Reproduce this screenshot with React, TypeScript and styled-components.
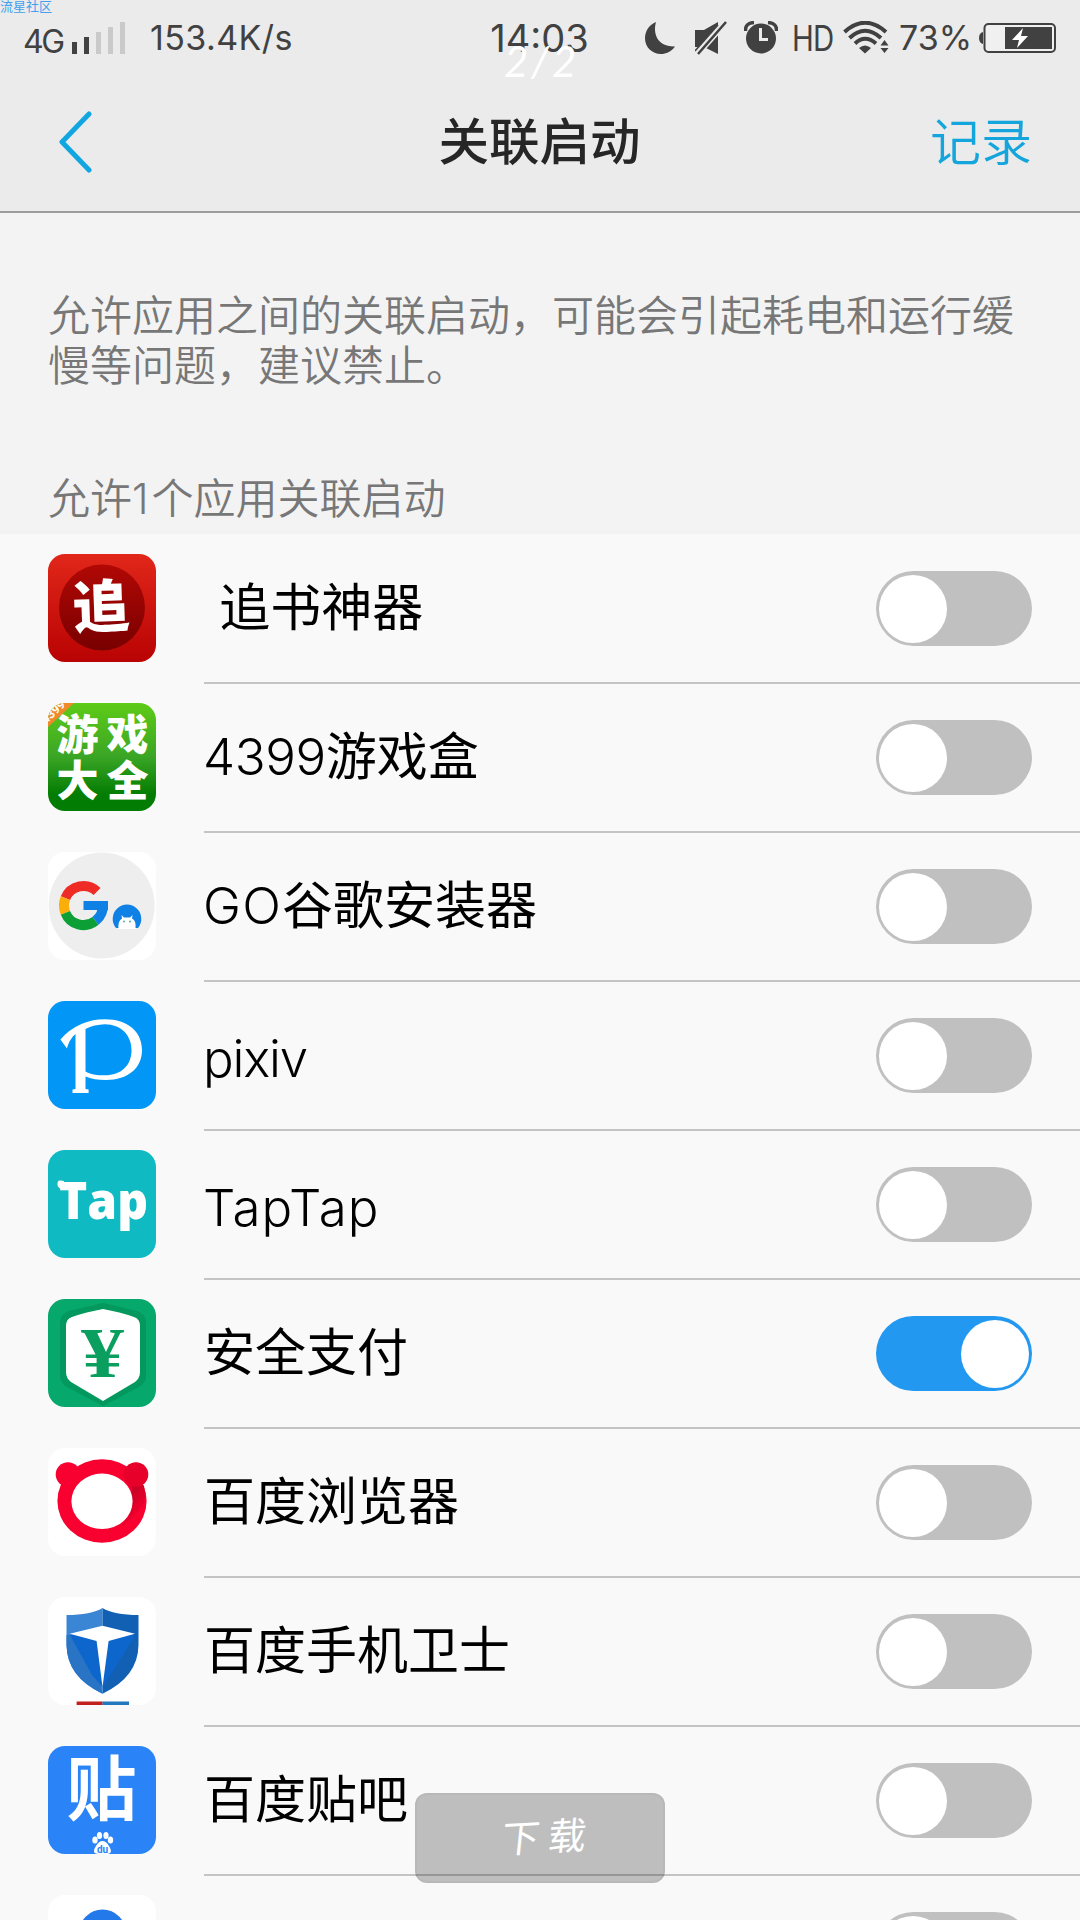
import styled, { createGlobalStyle } from "styled-components";
import { useState, ReactNode } from "react";

const GlobalStyle = createGlobalStyle`
  * {
    box-sizing: border-box;
  }
  body {
    margin: 0;
    background: #f3f3f3;
    font-family: Inter, "Noto Sans CJK SC", sans-serif;
  }
`;

const StyledPage = styled.div`
  position: relative;
  width: 1080px;
  height: 1920px;
  overflow: hidden;
  background: #f3f3f3;
`;

const StyledHeader = styled.header`
  display: flex;
  flex-direction: column;
  height: 213px;
  background: #ebebeb;
  border-bottom: 2px solid #9b9d9b;
`;

const StyledStatusBar = styled.div`
  display: grid;
  grid-template-columns: 1fr auto 1fr;
  align-items: center;
  height: 75px;
  padding: 0 24px 0 23px;
  color: #414141;
`;

const StyledStatusGroup = styled.div<{ $end?: boolean }>`
  display: flex;
  align-items: center;
  justify-content: ${(p) => (p.$end ? "flex-end" : "flex-start")};
`;

const StyledStatusText = styled.span<{ $size: number; $width?: number; $spacing?: number; $drop?: number; $left?: number }>`
  width: ${(p) => (p.$width ? `${p.$width}px` : "auto")};
  margin-left: ${(p) => p.$left || 0}px;
  padding-top: ${(p) => p.$drop || 0}px;
  font-size: ${(p) => p.$size}px;
  letter-spacing: ${(p) => p.$spacing || 0}px;
  line-height: 40px;
  white-space: nowrap;
`;

const StyledNetworkText = styled(StyledStatusText)`
  transform: scaleX(0.84);
  transform-origin: left;
`;

const StyledIcon = styled.svg<{ $left?: number }>`
  display: block;
  flex: none;
  margin-left: ${(p) => p.$left || 0}px;
`;

const StyledNavBar = styled.div`
  display: grid;
  grid-template-columns: 1fr auto 1fr;
  align-items: center;
  height: 134px;
  padding: 0 48px 0 58px;
`;

const StyledTitle = styled.h1`
  margin: 0;
  padding-right: 11px;
  font-size: 50.5px;
  font-weight: 500;
  line-height: 60px;
  color: #262626;
`;

const StyledBackButton = styled.button`
  justify-self: start;
  padding: 0;
  border: 0;
  background: none;
`;

const StyledRecordButton = styled.button`
  justify-self: end;
  padding: 2px 0 0;
  border: 0;
  background: none;
  font: 350 51px / 60px Inter, "Noto Sans CJK SC", sans-serif;
  color: #14a5dc;
`;

const StyledHint = styled.p`
  margin: 0;
  padding: 78px 48px 0;
  font-size: 42px;
  font-weight: 350;
  line-height: 49.5px;
  color: #777;
`;

const StyledSectionLabel = styled.h2`
  margin: 0;
  padding: 84px 48px 10px;
  font-size: 42px;
  font-weight: 350;
  line-height: 50px;
  color: #777;
`;

const StyledCount = styled.span`
  padding-right: 3px;
`;

const StyledList = styled.ul`
  margin: 0;
  padding: 1px 0 0;
  list-style: none;
  background: #f9f9f9;
`;

const StyledRow = styled.li`
  display: flex;
  height: 149px;
  padding-left: 48px;
`;

const StyledAppIcon = styled.svg`
  display: block;
  flex: none;
  width: 108px;
  height: 108px;
  margin: 19px 48px 0 0;
  border-radius: 17px;
`;

const StyledRowBody = styled.div`
  display: flex;
  flex: 1;
  align-items: center;
  justify-content: space-between;
  padding-right: 48px;
  border-bottom: 2px solid #c4c4c4;
`;

const StyledAppName = styled.span<{ $latin?: boolean }>`
  padding-top: ${(p) => (p.$latin ? 7 : 0)}px;
  padding-bottom: ${(p) => (p.$latin ? 0 : 2)}px;
  font-size: 51px;
  font-weight: 400;
  line-height: 60px;
  white-space: pre;
  color: #000;
`;

const StyledLatin = styled.span<{ $spacing: number }>`
  margin-left: -1px;
  font-weight: 360;
  letter-spacing: ${(p) => p.$spacing}px;
`;

const StyledSwitch = styled.button<{ $on: boolean }>`
  display: flex;
  flex: none;
  align-items: center;
  justify-content: ${(p) => (p.$on ? "flex-end" : "flex-start")};
  width: 156px;
  height: 75px;
  padding: 0 3px;
  border: 0;
  border-radius: 38px;
  background: ${(p) => (p.$on ? "#2398f0" : "#c0c0c0")};
`;

const StyledKnob = styled.span`
  width: 68px;
  height: 68px;
  border-radius: 50%;
  background: #fff;
`;

const StyledSiteMark = styled.span`
  position: absolute;
  top: -1px;
  left: 0;
  font-size: 13px;
  line-height: 14px;
  color: #42a0ee;
`;

const StyledPageCount = styled.span`
  position: absolute;
  top: 37px;
  left: 504px;
  width: 74px;
  font: italic 400 42px / 48px Lato, sans-serif;
  letter-spacing: 3px;
  color: #fff;
`;

const StyledDownload = styled.button`
  position: absolute;
  top: 1793px;
  left: 415px;
  width: 250px;
  height: 90px;
  padding: 0 0 6px 8px;
  border: 2px solid rgba(0, 0, 0, 0.03);
  border-radius: 12px;
  background: rgba(0, 0, 0, 0.235);
  font: 400 38px / 50px "Noto Sans CJK SC", sans-serif;
  color: #fff;
`;

const StyledDownloadText = styled.span`
  display: inline-block;
  transform: skew(-6deg, -3deg);
`;

const cjk = '"Noto Sans CJK SC", sans-serif';

const ZhuiShuIcon = () => (
  <>
    <defs>
      <linearGradient id="zsBg" x2="0" y2="1">
        <stop offset="0" stopColor="#e1271a" />
        <stop offset="1" stopColor="#b90303" />
      </linearGradient>
      <linearGradient id="zsDisc" x2="0" y2="1">
        <stop offset="0" stopColor="#b10805" />
        <stop offset="1" stopColor="#780000" />
      </linearGradient>
    </defs>
    <rect width="108" height="108" fill="url(#zsBg)" />
    <circle cx="54" cy="53.5" r="43" fill="url(#zsDisc)" />
    <text x="53" y="73.5" fontSize="57" fontWeight="900" textAnchor="middle" fill="#fff" fontFamily={cjk} transform="rotate(-2 53 53)">追</text>
  </>
);

const GameBoxIcon = () => (
  <>
    <defs>
      <linearGradient id="gbBg" x2="0" y2="1">
        <stop offset="0" stopColor="#5ecb18" />
        <stop offset="0.5" stopColor="#3aa525" />
        <stop offset="0.85" stopColor="#027c02" />
      </linearGradient>
    </defs>
    <rect width="108" height="108" fill="url(#gbBg)" />
    <path d="M0 10 L11 0 H26 L0 24 Z" fill="#ee8a2a" />
    <text x="-1" y="20" fontSize="12" fontWeight="700" fill="#fff" transform="rotate(-43 0 22)" fontFamily="Roboto">4399</text>
    <g fontSize="42" fontWeight="900" fill="#fff" fontFamily={cjk}>
      <text x="8.5" y="47">游</text>
      <text x="58.5" y="47">戏</text>
      <text x="8.5" y="92.5">大</text>
      <text x="58.5" y="92.5">全</text>
    </g>
  </>
);

const GoIcon = () => (
  <>
    <rect width="108" height="108" fill="#fff" />
    <circle cx="53.7" cy="53.5" r="53" fill="#eee" />
    <g fill="none" strokeWidth="10">
      <path d="M49.05 39.5 A19.5 19.5 0 0 0 17.4 46.2" stroke="#ef2b25" />
      <path d="M17.4 46.2 A19.5 19.5 0 0 0 17.4 60.8" stroke="#fbad0a" />
      <path d="M17.4 60.8 A19.5 19.5 0 0 0 47.5 68.9" stroke="#0b9f35" />
      <path d="M47.5 68.9 A19.5 19.5 0 0 0 54.8 52" stroke="#0f80e4" />
    </g>
    <path d="M35.5 49 H60 V58 H35.5 Z" fill="#0f80e4" />
    <path d="M68 76 A14.3 14.3 0 1 1 90 76 Z" fill="#0f80e4" />
    <path d="M70.5 77 C70 71 71.5 68 74 66.5 L73.5 63 L76 65.5 H82 L84.5 63 L84 66.5 C87 68 88 71 87.5 77 Z" fill="#fff" />
    <circle cx="76" cy="69.5" r="1" fill="#5aa" />
    <circle cx="82" cy="69.5" r="1" fill="#5aa" />
  </>
);

const PixivIcon = () => (
  <>
    <rect width="108" height="108" fill="#0296f7" />
    <path
      fillRule="evenodd"
      fill="#fff"
      d="M12.4 38.5 Q30 18.5 57 18.3 C80 18.3 94 31 94 49 C94 67 80 79 58 79 C50 79 43 78 37.5 75.5 V88 L40.6 88.5 V92 H24.5 V88.5 L27.5 88 V33 C24 36 20.5 41 19 47.5 Z M37.5 28 C43 25 50 23.5 57 23.3 C73 23.5 83.5 34 83.5 49 C83.5 65 73 74 57 74.3 C49 74.3 42 73.5 37.5 70.5 Z"
    />
  </>
);

const TapIcon = () => (
  <>
    <rect width="108" height="108" fill="#10bac2" />
    <path d="M9.5 35 Q9 30 12.5 30.5 L16 31 V39 Q10 39 9.5 35 Z" fill="#fff" />
    <text x="11" y="68.5" fontSize="52" fontWeight="800" fill="#fff" textLength="89" lengthAdjust="spacingAndGlyphs" fontFamily="Open Sans">Tap</text>
  </>
);

const PayIcon = () => (
  <>
    <rect width="108" height="108" fill="#06a86c" />
    <path d="M55 4 L89 12 Q98 15 98 24 V77 Q98 84 91 88 L55 107 L19 88 Q12 84 12 77 V24 Q12 15 21 12 Z" fill="#02985e" />
    <path d="M55 10 Q72 13 86 18 Q92 20 92 27 V73 Q92 79 87 83 L55 102 L23 83 Q18 79 18 73 V27 Q18 20 24 18 Q38 13 55 10 Z" fill="#fff" />
    <text x="33" y="77.5" fontSize="72" fontWeight="700" fill="#0b9f5f" textLength="43" lengthAdjust="spacingAndGlyphs" fontFamily="Liberation Serif">¥</text>
  </>
);

const BrowserIcon = () => (
  <>
    <defs>
      <linearGradient id="bearShade" x1="0" x2="0.4" y1="0" y2="1">
        <stop offset="0" stopColor="#f8002f" />
        <stop offset="0.5" stopColor="#c80024" />
        <stop offset="1" stopColor="#f8002f" />
      </linearGradient>
    </defs>
    <rect width="108" height="108" fill="#fff" />
    <ellipse cx="54" cy="53" rx="44.6" ry="41.7" fill="#f8002f" />
    <circle cx="20" cy="26.5" r="12.3" fill="#f8002f" />
    <path d="M78 18 L96 38 Q99 50 94 58 Q88 68 74 78 Q92 52 78 18 Z" fill="url(#bearShade)" />
    <circle cx="88" cy="26.5" r="12.3" fill="#e6002a" />
    <ellipse cx="54" cy="53.3" rx="30.6" ry="27.7" fill="#fff" />
  </>
);

const GuardIcon = () => (
  <>
    <rect width="108" height="108" fill="#fff" />
    <path d="M54.5 11 Q43 18 18.5 18 V48 Q19 80 54.5 96.7 Z" fill="#3a86d4" />
    <path d="M54.5 11 Q66 18 90.5 18 V48 Q90 80 54.5 96.7 Z" fill="#1260b4" />
    <path d="M21.7 38 L48 70 L54.5 96.7 Q19 80 18.5 48 V38 Z" fill="#2a74c6" />
    <path d="M22 38 L54.5 30 L87 38 L75 58 L54.5 90 L44 78 Z" fill="#0d66cc" />
    <path d="M21.7 36.7 L54.5 28.7 L87 36.7 L60.6 44 L54.5 90 L48.6 44 Z" fill="#fff" />
    <rect x="28.6" y="104.5" width="26" height="3.5" fill="#c31f1f" />
    <rect x="54.5" y="104.5" width="26.5" height="3.5" fill="#2277bd" />
  </>
);

const TiebaIcon = () => (
  <>
    <rect width="108" height="108" fill="#2a84f7" />
    <text x="18.5" y="68.5" fontSize="70" fontWeight="700" fill="#fff" fontFamily={cjk}>贴</text>
    <g fill="#fff">
      <ellipse cx="47" cy="94" rx="2.7" ry="3.5" />
      <ellipse cx="51.5" cy="89.5" rx="2.6" ry="3.6" />
      <ellipse cx="58" cy="89.5" rx="2.6" ry="3.6" />
      <ellipse cx="62.5" cy="94" rx="2.7" ry="3.5" />
      <path d="M54.5 95 Q58 95 61 100 Q66 108 58 108 H50 Q43 107 48 100 Q51 95 54.5 95 Z" />
    </g>
    <text x="54.5" y="106.5" fontSize="10" fontWeight="700" textAnchor="middle" fill="#2a84f7" fontFamily="Roboto">du</text>
  </>
);

const RoundIcon = () => (
  <>
    <rect width="108" height="108" fill="#fff" />
    <circle cx="54.5" cy="38" r="23.5" fill="#2379ea" />
  </>
);

interface AppEntry {
  id: number;
  latin?: string;
  spacing?: number;
  name: string;
  icon: ReactNode;
  allowed: boolean;
}

const apps: AppEntry[] = [
  { id: 1, latin: "\u00a0", spacing: 2, name: "追书神器", icon: <ZhuiShuIcon />, allowed: false },
  { id: 2, latin: "4399", spacing: -0.4, name: "游戏盒", icon: <GameBoxIcon />, allowed: false },
  { id: 3, latin: "GO", spacing: 1.2, name: "谷歌安装器", icon: <GoIcon />, allowed: false },
  { id: 4, latin: "pixiv", spacing: -1.2, name: "", icon: <PixivIcon />, allowed: false },
  { id: 5, latin: "TapTap", spacing: 0.9, name: "", icon: <TapIcon />, allowed: false },
  { id: 6, name: "安全支付", icon: <PayIcon />, allowed: true },
  { id: 7, name: "百度浏览器", icon: <BrowserIcon />, allowed: false },
  { id: 8, name: "百度手机卫士", icon: <GuardIcon />, allowed: false },
  { id: 9, name: "百度贴吧", icon: <TiebaIcon />, allowed: false },
  { id: 10, name: "", icon: <RoundIcon />, allowed: false },
];

function StatusBar() {
  return (
    <StyledStatusBar>
      <StyledStatusGroup>
        <StyledStatusText $size={32} $width={48} $spacing={-2.5} $drop={8}>4G</StyledStatusText>
        <StyledIcon width="54" height="32" viewBox="0 0 54 32">
          <rect x="1" y="20" width="5" height="12" fill="#414141" />
          <rect x="13" y="15" width="5" height="17" fill="#414141" />
          <rect x="25" y="10" width="5" height="22" fill="#cacaca" />
          <rect x="37" y="5" width="5" height="27" fill="#cacaca" />
          <rect x="49" y="0" width="5" height="32" fill="#cacaca" />
        </StyledIcon>
        <StyledStatusText $size={34} $left={25} $spacing={0.4}>153.4K/s</StyledStatusText>
      </StyledStatusGroup>
      <StyledStatusText $size={38}>14:03</StyledStatusText>
      <StyledStatusGroup $end>
        <StyledIcon width="30" height="32" viewBox="0 0 30 32">
          <path d="M11 0 C8 10 11 25 30 24.5 C26 30 21 32 16 32 C7 32 0 25 0 16.5 C0 9 4 3 11 0 Z" fill="#414141" />
        </StyledIcon>
        <StyledIcon $left={20} width="32" height="34" viewBox="0 0 32 34">
          <path d="M0 9 H9 L23 1 V33 L9 26 H0 Z" fill="#414141" />
          <path d="M1 34 L31 0" stroke="#ebebeb" strokeWidth="7" />
          <path d="M3 33 L31 1" stroke="#414141" strokeWidth="2.5" />
          <path d="M0 30 L23 4" stroke="#414141" strokeWidth="1.5" />
        </StyledIcon>
        <StyledIcon $left={17} width="34" height="33" viewBox="0 0 34 33">
          <circle cx="17" cy="17.5" r="15" fill="#414141" />
          <path d="M1.5 10 Q1 2 10 1.5" stroke="#414141" strokeWidth="3.5" fill="none" />
          <path d="M32.5 10 Q33 2 24 1.5" stroke="#414141" strokeWidth="3.5" fill="none" />
          <path d="M16.5 7 V18.5 H24" stroke="#ebebeb" strokeWidth="3" fill="none" />
        </StyledIcon>
        <StyledNetworkText $size={35} $width={43} $left={14} $spacing={-1}>HD</StyledNetworkText>
        <StyledIcon $left={8} width="46" height="33" viewBox="0 0 46 33">
          <g fill="none" stroke="#414141" strokeWidth="4">
            <path d="M1.5 11 Q22 -7.5 43 11" />
            <path d="M6.5 17 Q22 2.5 38 17" />
            <path d="M12 22.5 Q22 13 33 22.5" />
          </g>
          <path d="M16 27 Q22 22 28 27 L22 32.5 Z" fill="#414141" />
          <path d="M41.5 19 L45.5 24.5 H37.5 Z M37.5 27 H45.5 L41.5 32 Z" fill="#414141" />
        </StyledIcon>
        <StyledStatusText $size={34} $width={70} $left={10}>73%</StyledStatusText>
        <StyledIcon $left={10} width="77" height="30" viewBox="0 0 77 30">
          <path d="M4 9 Q0 10 0 15 Q0 20 4 21 Z" fill="#414141" />
          <rect x="5.5" y="1" width="70.5" height="28" rx="4" fill="#f0f0f0" stroke="#414141" strokeWidth="2" />
          <rect x="26" y="4" width="47" height="22" fill="#414141" />
          <path d="M44 5 L33 17 H40 L38 25 L49 13 H42 Z" fill="#fff" />
        </StyledIcon>
      </StyledStatusGroup>
    </StyledStatusBar>
  );
}

function App() {
  const [entries, setEntries] = useState<AppEntry[]>(apps);

  const toggle = (id: number) => {
    setEntries(entries.map((entry) => (entry.id === id ? { ...entry, allowed: !entry.allowed } : entry)));
  };

  return (
    <StyledPage>
      <GlobalStyle />
      <StyledHeader>
        <StatusBar />
        <StyledNavBar>
          <StyledBackButton>
            <StyledIcon width="34" height="62" viewBox="0 0 34 62">
              <path d="M31 3 L4 31 L31 59" fill="none" stroke="#12a6e0" strokeWidth="5" strokeLinecap="round" strokeLinejoin="round" />
            </StyledIcon>
          </StyledBackButton>
          <StyledTitle>关联启动</StyledTitle>
          <StyledRecordButton>记录</StyledRecordButton>
        </StyledNavBar>
      </StyledHeader>
      <StyledHint>允许应用之间的关联启动，可能会引起耗电和运行缓慢等问题，建议禁止。</StyledHint>
      <StyledSectionLabel>
        允许<StyledCount>1</StyledCount>个应用关联启动
      </StyledSectionLabel>
      <StyledList>
        {entries.map((entry) => (
          <StyledRow key={entry.id}>
            <StyledAppIcon viewBox="0 0 108 108">{entry.icon}</StyledAppIcon>
            <StyledRowBody>
              <StyledAppName $latin={!!entry.latin && !entry.name}>
                {entry.latin && <StyledLatin $spacing={entry.spacing || 0}>{entry.latin}</StyledLatin>}
                {entry.name}
              </StyledAppName>
              <StyledSwitch $on={entry.allowed} onClick={() => toggle(entry.id)}>
                <StyledKnob />
              </StyledSwitch>
            </StyledRowBody>
          </StyledRow>
        ))}
      </StyledList>
      <StyledSiteMark>流星社区</StyledSiteMark>
      <StyledPageCount>2/2</StyledPageCount>
      <StyledDownload>
        <StyledDownloadText>下 载</StyledDownloadText>
      </StyledDownload>
    </StyledPage>
  );
}

export default App;
